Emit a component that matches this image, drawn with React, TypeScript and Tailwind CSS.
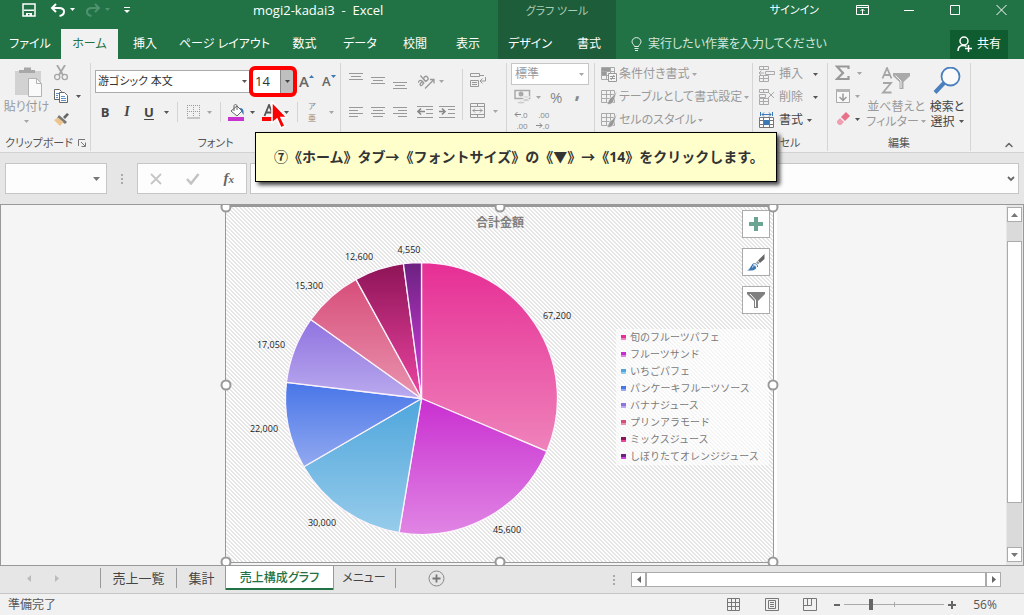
import React from 'react';
import { ChevronUp } from 'lucide-react';

const GREY = '#a6a6a6';
const DARK = '#555555';

type IconProps = { w: number; h: number; children: React.ReactNode; className?: string };

function Icon({ w, h, children, className = '' }: IconProps) {
  return (
    <svg width={w} height={h} viewBox={`0 0 ${w} ${h}`} fill="none" className={`shrink-0 ${className}`} aria-hidden="true">
      {children}
    </svg>
  );
}

function Caret({ color = DARK }: { color?: string }) {
  return (
    <Icon w={5} h={3}>
      <path d="M0 0h5L2.500 3z" fill={color} />
    </Icon>
  );
}

function CaretButton({ color = DARK, label }: { color?: string; label: string }) {
  return (
    <button aria-label={label} className="flex h-5 w-3 items-center justify-center">
      <Caret color={color} />
    </button>
  );
}

function Sep() {
  return <span className="mx-[5px] h-5 w-px bg-[#d5d5d5]" />;
}

function Group({ label, className, children, launcher }: { label: string; className: string; children: React.ReactNode; launcher?: boolean }) {
  return (
    <section className={`flex shrink-0 flex-col ${className}`}>
      <div className="flex min-h-0 flex-1 border-r border-[#d5d5d5]">
        <div className="flex min-w-0 flex-1 flex-col">
          <div className="flex-1">{children}</div>
          <div className="flex h-4 items-center justify-center text-[11px] text-[#555]">
            <span className="flex-1 text-center whitespace-nowrap">{label}</span>
            {launcher && (
              <button aria-label={`${label}の設定`} className="mr-1">
                <Icon w={8} h={8}>
                  <path d="M.5 7V.5H7M3 3l4 4M7.5 3.500V7.500H3.500" stroke="#777" />
                </Icon>
              </button>
            )}
          </div>
        </div>
      </div>
    </section>
  );
}

function Lines({ rows }: { rows: [number, number, number][] }) {
  return (
    <Icon w={16} h={16}>
      {rows.map(([y, x1, x2]) => (
        <path key={y} d={`M${x1} ${y}.5H${x2}`} stroke="#999" />
      ))}
    </Icon>
  );
}

const topTabs = [
  { t: '挿入', c: 'w-[54px]' },
  { t: 'ページ レイアウト', c: 'w-[105px]' },
  { t: '数式', c: 'w-[55px]' },
  { t: 'データ', c: 'w-[56px]' },
  { t: '校閲', c: 'w-[54px]' },
  { t: '表示', c: 'w-[52px]' },
];

function Header() {
  return (
    <header className="flex h-[59px] bg-[#217346] text-white">
      <div className="flex w-[498px] shrink-0 flex-col">
        <div className="flex h-[29px] items-center pb-[10px]">
          <div className="flex w-[253px] items-center pl-[22px]">
            <button aria-label="上書き保存">
              <Icon w={14} h={14}>
                <path d="M1 1h12v12H1z" stroke="#fff" strokeWidth="1.500" />
                <path d="M2 6.500h10v1.500H2zM4 10h6v3H7.500v-2H6v2H4z" fill="#fff" />
              </Icon>
            </button>
            <button aria-label="元に戻す" className="ml-[14px]">
              <Icon w={16} h={14}>
                <path d="M6 1 2 5l4 4M2.500 5H9c3.500 0 5 1.500 5 3.500S12.500 12.500 9.500 13" stroke="#fff" strokeWidth="2" />
              </Icon>
            </button>
            <span className="ml-1">
              <Caret color="#fff" />
            </span>
            <button aria-label="やり直し" className="ml-[10px]">
              <Icon w={16} h={14}>
                <path d="m10 1 4 4-4 4M13.500 5H7C3.500 5 2 6.500 2 8.500S3.500 12.500 6.500 13" stroke="#4f9270" strokeWidth="2" />
              </Icon>
            </button>
            <span className="ml-1">
              <Caret color="#4f9270" />
            </span>
            <button aria-label="クイック アクセス ツール バーのユーザー設定" className="ml-[14px]">
              <Icon w={6} h={6}>
                <path d="M0 .5h6" stroke="#fff" />
                <path d="M0 3h6L3 6z" fill="#fff" />
              </Icon>
            </button>
          </div>
          <h1 className="text-[13px] leading-5 whitespace-pre">mogi2-kadai3  -  Excel</h1>
        </div>
        <nav className="flex flex-1">
          <button className="mr-px w-[60px]">ファイル</button>
          <button className="w-[57px] bg-[#f1f1f1] text-[#217346]">ホーム</button>
          {topTabs.map((x) => (
            <button key={x.t} className={`whitespace-nowrap ${x.c}`}>
              {x.t}
            </button>
          ))}
        </nav>
      </div>
      <div className="flex w-[118px] shrink-0 flex-col bg-[#1e5d3a]">
        <div className="flex h-[29px] items-center justify-center pb-2 text-[11px] text-[#a9cdb8]">グラフ ツール</div>
        <nav className="flex flex-1">
          <button className="w-[64px]">デザイン</button>
          <button className="w-[54px]">書式</button>
        </nav>
      </div>
      <div className="flex min-w-0 flex-1 flex-col">
        <div className="flex h-[29px] items-center justify-end pr-[17px] pb-[10px]">
          <button className="mr-[37px] text-[11px]">サインイン</button>
          <button aria-label="リボンの表示オプション">
            <Icon w={13} h={10}>
              <path d="M.5 .5h12v9H.5zM.5 2.500h12M6.500 9V4M4.500 6l2-2 2 2" stroke="#fff" />
            </Icon>
          </button>
          <button aria-label="最小化" className="ml-[35px]">
            <Icon w={10} h={10}>
              <path d="M0 5.500h10" stroke="#fff" />
            </Icon>
          </button>
          <button aria-label="最大化" className="ml-9">
            <Icon w={10} h={10}>
              <path d="M.5 .5h9v9h-9z" stroke="#fff" />
            </Icon>
          </button>
          <button aria-label="閉じる" className="ml-9">
            <Icon w={11} h={10}>
              <path d="m.5 0 10 10M10.500 0l-10 10" stroke="#fff" />
            </Icon>
          </button>
        </div>
        <div className="flex flex-1 items-center pr-4 pl-[15px]">
          <button className="flex items-center gap-1.5 text-[#d3e6db]">
            <Icon w={11} h={14}>
              <path d="M3.500 9.500C3.500 8 1 7 1 4.800a4.500 4.200 0 0 1 9 0C10 7 7.500 8 7.500 9.500zM3.500 11.500h4M4 13.500h3" stroke="#e5f0ea" />
            </Icon>
            実行したい作業を入力してください
          </button>
          <button className="ml-auto flex h-[29px] w-[58px] items-center justify-center gap-1 bg-[#0e5c30]">
            <Icon w={16} h={16}>
              <circle cx="7" cy="5" r="4" stroke="#fff" strokeWidth="1.500" />
              <path d="M1 15c0-3.500 2-5.500 5-5.500 1.500 0 2.500.3 3.500 1M8 12.500h7M11.500 9v7" stroke="#fff" strokeWidth="1.500" />
            </Icon>
            共有
          </button>
        </div>
      </div>
    </header>
  );
}

function ClipboardGroup() {
  return (
    <Group label="クリップボード" className="w-[91px]" launcher>
      <div className="flex">
        <button className="flex w-[53px] flex-col items-center pt-1 text-[#999]">
          <Icon w={30} h={31} className="ml-1">
            <path d="M1 4h26v24H1z" fill="#d2d2d2" />
            <path d="M5 6V3h5V.5h7V3h4v3z" fill="#a8a8a8" />
            <path d="M14.500 11.500h8l5 5v13h-13z" fill="#fafafa" stroke="#b3b3b3" />
            <path d="M22.500 11.500v5h5" stroke="#b3b3b3" />
          </Icon>
          <span className="leading-[18px] whitespace-nowrap">貼り付け</span>
          <span className="mt-1">
            <Caret color={GREY} />
          </span>
        </button>
        <div className="flex flex-col gap-[7px] pt-0.5">
          <button aria-label="切り取り">
            <Icon w={16} h={16}>
              <path d="M4 0l6 10M12 0 6 10" stroke="#a6a6a6" strokeWidth="1.800" />
              <circle cx="4.200" cy="12" r="2.600" stroke="#a6a6a6" strokeWidth="1.300" />
              <circle cx="11.800" cy="12" r="2.600" stroke="#a6a6a6" strokeWidth="1.300" />
            </Icon>
          </button>
          <button aria-label="コピー" className="flex items-center gap-[7px]">
            <Icon w={16} h={16}>
              <path d="M1.500 1.500h5l2 2v8h-7z" fill="#fff" stroke="#666" />
              <path d="M6.500 4.500h5l3 3v7h-8z" fill="#fff" stroke="#666" />
              <path d="M3 5.500h3M3 7.500h2M3 9.500h2" stroke="#5c8fc4" />
              <path d="M8 8.500h4M8 10.500h5M8 12.500h5" stroke="#5c8fc4" />
            </Icon>
            <Caret />
          </button>
          <button aria-label="書式のコピー/貼り付け">
            <Icon w={16} h={16}>
              <path d="m10 6 4-4 2 1.500L12 8z" fill="#666" />
              <path d="m6 4 8 7-2 2-8-6z" fill="#777" />
              <path d="M5 6.500 1 9l6 6 3.500-4z" fill="#edc48e" />
            </Icon>
          </button>
        </div>
      </div>
    </Group>
  );
}

function FontGroup() {
  return (
    <Group label="フォント" className="w-[250px]">
      <div className="flex h-9 items-center pl-1">
        <label className="flex items-center">
          <select aria-label="フォント" className="h-[23px] w-[155px] appearance-none border border-[#ababab] bg-white pl-0.5 text-[11px] text-[#333]">
            <option>游ゴシック 本文</option>
          </select>
          <span className="-ml-2">
            <Caret />
          </span>
        </label>
        <label className="relative ml-[6px] flex h-[23px] items-center">
          <select aria-label="フォント サイズ" className="h-[23px] w-10 appearance-none bg-white pl-0.5 text-[13px] text-[#333]">
            <option>14</option>
          </select>
          <span className="-ml-[13px] flex h-[23px] w-[13px] items-center justify-center border-l border-[#8a8a8a] bg-[#bfbfbf]">
            <Caret color="#444" />
          </span>
          <span className="pointer-events-none absolute -inset-1 rounded-[6px] border-4 border-[#ff0000]" />
        </label>
        <button aria-label="フォント サイズの拡大" className="ml-[6px] flex items-start text-[15px] leading-5 font-semibold text-[#666]">
          A
          <Icon w={5} h={7}>
            <path d="M0 7h5L2.500 4z" fill="#3c78b4" />
          </Icon>
        </button>
        <button aria-label="フォント サイズの縮小" className="ml-2 flex items-start text-[13px] leading-5 font-semibold text-[#666]">
          A
          <Icon w={5} h={7}>
            <path d="M0 4h5L2.500 7z" fill="#3c78b4" />
          </Icon>
        </button>
      </div>
      <div className="flex h-[26px] items-center pl-[3px]">
        <button aria-label="太字" className="w-[22px] text-[13px] font-bold text-[#444]">B</button>
        <button aria-label="斜体" className="w-[22px] font-['Liberation_Serif',serif] text-[14px] font-bold text-[#444] italic">I</button>
        <button aria-label="下線" className="w-[22px] text-[13px] font-bold text-[#444] underline underline-offset-2">U</button>
        <CaretButton label="下線の種類" />
        <Sep />
        <button aria-label="罫線" className="flex w-5 justify-center">
          <Icon w={13} h={14}>
            <path d="M.5 0v12M6.500 0v12M12.500 0v12M0 .5h13M0 6.500h13" stroke="#999" strokeDasharray="1 1" />
            <path d="M0 13h13" stroke="#999" />
          </Icon>
        </button>
        <CaretButton label="罫線の種類" color={GREY} />
        <Sep />
        <button aria-label="塗りつぶしの色" className="flex w-5 justify-center">
          <Icon w={17} h={17}>
            <path d="m3 7 6-5 5 5-5 5z" fill="#fff" stroke="#666" />
            <path d="M6 7V2c0-2 3-2 3 0v4" stroke="#666" />
            <path d="M12 4c3 0 4 2 3.500 7L13 7z" fill="#3c78b4" />
            <path d="M0 13h16v4H0z" fill="#c832cd" />
          </Icon>
        </button>
        <CaretButton label="塗りつぶしの色の選択" />
        <button aria-label="フォントの色" className="flex w-[22px] justify-center">
          <Icon w={16} h={17}>
            <path d="M3.500 12 8 1l4.500 11M5 8.500h6" stroke="#555" strokeWidth="1.800" />
            <path d="M1 13h14v4H1z" fill="#ff0000" />
          </Icon>
        </button>
        <CaretButton label="フォントの色の選択" />
        <Sep />
        <button aria-label="ふりがなの表示" className="flex w-[18px] flex-col items-center text-[8px] leading-[12px] text-[#888]">
          <span>ア</span>
          <span>亜</span>
        </button>
        <span className="ml-1">
          <CaretButton label="ふりがなの設定" color={GREY} />
        </span>
      </div>
    </Group>
  );
}

const verticalAligns: { label: string; rows: [number, number, number][] }[] = [
  { label: '上揃え', rows: [[0, 1, 15], [3, 3, 13], [6, 1, 15]] },
  { label: '上下中央揃え', rows: [[4, 1, 15], [7, 3, 13], [10, 1, 15]] },
  { label: '下揃え', rows: [[9, 1, 15], [12, 3, 13], [15, 1, 15]] },
];

function AlignGroup() {
  return (
    <Group label="配置" className="w-[166px]">
      <div className="flex">
        <div className="my-[6px] flex w-[122px] flex-col gap-[11px] border-r border-[#d5d5d5] pl-1">
          <div className="flex h-6 items-center">
            {verticalAligns.map((a) => (
              <button key={a.label} aria-label={a.label} className="flex w-[22px] justify-center">
                <Lines rows={a.rows} />
              </button>
            ))}
            <button aria-label="方向" className="ml-1 flex w-6 items-center justify-center">
              <Icon w={18} h={16}>
                <g stroke="#999" strokeWidth="1.300" transform="rotate(-42 6 8)">
                  <path d="M.5 5.200c3-1 4 0 4 1.500V10M4.500 7.200C2 7.200.5 7.500.5 8.800S3 10.500 4.500 8.500M7 1.500V10" />
                  <circle cx="9" cy="7.500" r="2.200" />
                </g>
                <path d="m7 15.500 9-9M12 6.500h4v4" stroke="#999" strokeWidth="1.300" />
              </Icon>
            </button>
            <Caret color={GREY} />
          </div>
          <div className="flex h-4 items-center">
            <button aria-label="左揃え" className="flex w-[22px] justify-center">
              <Lines rows={[[3, 1, 15], [6, 1, 10], [9, 1, 15], [12, 1, 10]]} />
            </button>
            <button aria-label="中央揃え" className="flex w-[22px] justify-center">
              <Lines rows={[[3, 1, 15], [6, 3, 13], [9, 1, 15], [12, 3, 13]]} />
            </button>
            <button aria-label="右揃え" className="flex w-[22px] justify-center">
              <Lines rows={[[3, 1, 15], [6, 6, 15], [9, 1, 15], [12, 6, 15]]} />
            </button>
            {['インデントを減らす', 'インデントを増やす'].map((l, i) => (
              <button key={l} aria-label={l} className={i === 0 ? 'ml-[3px] flex w-[22px] justify-center' : 'flex w-[22px] justify-center'}>
                <Icon w={16} h={14}>
                  <path d="M0 1.500h16M9 4.500h7M9 8.500h7M0 12.500h16" stroke="#999" />
                  <path d={i === 0 ? 'M1 6.500h7M4 3.500l-3 3 3 3' : 'M0 6.500h6M3 3.500l3 3-3 3'} stroke="#888" strokeWidth="1.600" />
                </Icon>
              </button>
            ))}
          </div>
        </div>
        <div className="flex flex-col gap-[15px] pt-[9px] pl-[7px]">
          <button aria-label="折り返して全体を表示する">
            <Icon w={16} h={16}>
              <path d="M.5 1.500h9v3h-9zM.5 8.500h8v6h-8zM2 10.500h5M2 12.500h5M9.500 3.500H14" stroke="#999" />
              <path d="M15.500 5v4H10M12.500 6.500 10 9l2.500 2.500" stroke="#999" />
            </Icon>
          </button>
          <button aria-label="セルを結合して中央揃え" className="flex items-center gap-[7px]">
            <Icon w={16} h={16}>
              <path d="M.5 .5h14v14H.5zM.5 3.500h14M.5 11.500h14M7.500 .5v3M7.500 11.500v3M2.500 7.500h10M5 5.500l-2 2 2 2M10 5.500l2 2-2 2" stroke="#999" />
            </Icon>
            <Caret color={GREY} />
          </button>
        </div>
      </div>
    </Group>
  );
}

function NumberGroup() {
  return (
    <Group label="数値" className="w-[88px]">
      <div className="flex flex-col pl-1 text-[#999]">
        <label className="flex items-center">
          <select aria-label="表示形式" className="h-[22px] w-[78px] appearance-none border border-[#c6c6c6] bg-white pl-[3px] text-[#999]">
            <option>標準</option>
          </select>
          <span className="-ml-[10px]">
            <Caret color={GREY} />
          </span>
        </label>
        <div className="flex h-6 items-center">
          <button aria-label="通貨表示形式" className="ml-[3px] flex items-center gap-[5px]">
            <Icon w={17} h={16}>
              <path d="M1 1.500h14.500v8H1z" stroke="#aaa" strokeWidth="1.500" />
              <circle cx="7" cy="5" r="2.500" fill="#aaa" />
              <ellipse cx="12" cy="8" rx="3.500" ry="1.500" fill="#ddd" stroke="#f1f1f1" />
              <ellipse cx="12" cy="11" rx="3.500" ry="1.500" fill="#ccc" stroke="#f1f1f1" />
              <ellipse cx="7" cy="13.500" rx="3.500" ry="1.500" fill="#ccc" stroke="#f1f1f1" />
            </Icon>
            <Caret color={GREY} />
          </button>
          <button aria-label="パーセント スタイル" className="ml-[9px] text-[15px] leading-5 text-[#888]">%</button>
          <button aria-label="桁区切りスタイル" className="ml-3 pb-3 text-[20px] leading-4 font-bold text-[#888]">,</button>
        </div>
        <div className="flex h-[22px] items-center gap-2 pl-[3px] text-[8px] leading-[11px] text-[#888]">
          <button aria-label="小数点以下の表示桁数を増やす" className="flex flex-col items-end">
            <span className="flex items-center">
              <Icon w={7} h={5}>
                <path d="M7 2.500H1M3.500 0 1 2.500 3.500 5" stroke="#888" />
              </Icon>
              .0
            </span>
            <span>.00</span>
          </button>
          <button aria-label="小数点以下の表示桁数を減らす" className="flex flex-col items-end">
            <span>.00</span>
            <span className="flex items-center">
              <Icon w={7} h={5}>
                <path d="M0 2.500h6M3.500 0 6 2.500 3.500 5" stroke="#888" />
              </Icon>
              .0
            </span>
          </button>
        </div>
      </div>
    </Group>
  );
}

function StylesGroup() {
  return (
    <Group label="スタイル" className="w-[158px]">
      <div className="flex flex-col items-start gap-[3px] pt-px pl-[6px] text-[#999]">
        {['条件付き書式', 'テーブルとして書式設定', 'セルのスタイル'].map((t, i) => (
          <button key={t} className="flex h-5 items-center whitespace-nowrap">
            <Icon w={17} h={16}>
              <path d="M.5 1.500h13v12H.5zM.5 5.500h13M.5 9.500h13M5.500 1.500v12M9.500 1.500v12" stroke="#aaa" />
              {i === 0 ? (
                <>
                  <path d="M1 2h8v3H1zM1 6h4v3H1z" fill="#999" />
                  <path d="M7.500 7.500h8v8h-8z" fill="#f5f5f5" stroke="#999" />
                  <path d="M9 10.500h5M9 12.500h5M13 9l-3 5" stroke="#999" />
                </>
              ) : (
                <path d="m16 2-5 6-2 1-3 6c4 1 6-1 7-4z" fill="#999" stroke="#f1f1f1" strokeWidth=".6" />
              )}
            </Icon>
            <span className="ml-px">{t}</span>
            <span className="ml-0.5">
              <Caret color={GREY} />
            </span>
          </button>
        ))}
      </div>
    </Group>
  );
}

function CellsGroup() {
  return (
    <Group label="セル" className="w-[75px]">
      <div className="flex flex-col gap-[3px] pt-px pl-[6px]">
        {['挿入', '削除', '書式'].map((t, i) => (
          <button key={t} className={`flex h-5 items-center ${i === 2 ? 'text-[#444]' : 'text-[#999]'}`}>
            {i === 2 ? (
              <Icon w={16} h={16}>
                <path d="M1.500 0v4M13.500 0v4M3 2.500h9M5 .5l-2 2 2 2M10 .5l2 2-2 2" stroke="#3c78b4" />
                <path d="M.5 5.500h14v10H.5zM.5 8.500h14M.5 12.500h14M4.500 5.500v10M10.500 5.500v10" fill="#fff" stroke="#777" />
                <path d="M5 8h5v5H5z" fill="#3c78b4" />
              </Icon>
            ) : (
              <Icon w={16} h={16}>
                <path d="M.5 .5h9v3h-9zM4.500 .5v3M.5 9.500h9v6h-9zM.5 12.500h9M4.500 9.500v6" stroke="#aaa" />
                {i === 0 ? (
                  <path d="M6.500 5.500h9v3h-9zM5 7H0M2.500 4.500 0 7l2.500 2.500" stroke="#aaa" />
                ) : (
                  <path d="M.5 5.500h6v3h-6zM9 3l6 6M15 3 9 9" stroke="#aaa" />
                )}
              </Icon>
            )}
            <span className="ml-1 w-6">{t}</span>
            <span className={i === 2 ? 'ml-1' : 'ml-[10px]'}>
              <Caret />
            </span>
          </button>
        ))}
      </div>
    </Group>
  );
}

function EditGroup() {
  return (
    <Group label="編集" className="w-[143px]">
      <div className="flex">
        <div className="flex w-[36px] flex-col gap-[3px] pl-[7px]">
          <button aria-label="合計" className="flex h-5 items-center gap-1.5">
            <Icon w={16} h={16}>
              <path d="M13.500 4V1.500H2L8 8l-6 6h11.500V11" stroke="#999" strokeWidth="2.200" />
            </Icon>
            <Caret color={GREY} />
          </button>
          <button aria-label="フィル" className="flex h-5 items-center gap-1">
            <Icon w={16} h={16}>
              <path d="M1.500 1.500h13v13h-13z" fill="#f8f8f8" stroke="#aaa" />
              <path d="M1 1h14v3H1z" fill="#b5b5b5" />
              <path d="M8 5.500v7M4.500 9 8 12.500 11.500 9" stroke="#999" strokeWidth="1.500" />
            </Icon>
            <Caret color={GREY} />
          </button>
          <button aria-label="クリア" className="flex h-5 items-center gap-1">
            <Icon w={16} h={16}>
              <path d="m6 6 5-5 4 4-5 5z" fill="#e8718a" />
              <path d="m5 7 4 4-3 3H4l-2-2v-2z" fill="#ef9fb0" />
            </Icon>
            <Caret />
          </button>
        </div>
        <button className="ml-[5px] flex w-[54px] flex-col items-center pt-1 leading-[15px] whitespace-nowrap text-[#999]">
          <Icon w={30} h={28}>
            <path d="M1.500 11.500 6 1l4.500 10.500M3.500 8h5M2 16h8l-8 9.500h8.500" stroke="#a6a6a6" strokeWidth="1.800" />
            <path d="M12 6h17v3l-6.500 6v7h-4v-7L12 9z" fill="#aaa" />
            <path d="m14.500 8.500 5.500 5.500v7" stroke="#f1f1f1" />
          </Icon>
          <span className="mt-1">並べ替えと</span>
          <span className="flex items-center gap-0.5">
            フィルター
            <Caret color={GREY} />
          </span>
        </button>
        <button className="ml-[5px] flex w-[38px] flex-col items-center pt-1 leading-[15px] whitespace-nowrap text-[#444]">
          <Icon w={28} h={28}>
            <circle cx="17.500" cy="9.500" r="9" fill="#fafafa" stroke="#4a80bd" strokeWidth="1.800" />
            <path d="m11 16-9 9.500" stroke="#4a80bd" strokeWidth="4" />
          </Icon>
          <span className="mt-1">検索と</span>
          <span className="flex items-center gap-1">
            選択
            <Caret />
          </span>
        </button>
      </div>
    </Group>
  );
}

function FormulaBar() {
  return (
    <div className="flex h-[51px] items-center bg-[#e6e6e6] px-[5px]">
      <label className="flex w-[102px] shrink-0 items-center">
        <input aria-label="名前ボックス" className="h-[31px] w-full border border-[#c6c6c6] bg-[#fdfdfd] pr-4 pl-1" />
        <span className="-ml-[14px] w-[14px]">
          <Icon w={7} h={4}>
            <path d="M0 0h7L3.500 4z" fill="#777" />
          </Icon>
        </span>
      </label>
      <Icon w={2} h={10} className="ml-[14px]">
        <path d="M0 0h2v2H0zM0 4h2v2H0zM0 8h2v2H0z" fill="#aaa" />
      </Icon>
      <div className="ml-[14px] flex h-[31px] w-[110px] shrink-0 items-center justify-around border border-[#c6c6c6] bg-[#fdfdfd]">
        <button aria-label="キャンセル">
          <Icon w={12} h={12}>
            <path d="m1 1 10 10M11 1 1 11" stroke="#c6c6c6" strokeWidth="1.800" />
          </Icon>
        </button>
        <button aria-label="入力">
          <Icon w={14} h={12}>
            <path d="m1 6 4 4.500L12.500 1" stroke="#c3c3c3" strokeWidth="2.500" />
          </Icon>
        </button>
        <button aria-label="関数の挿入" className="font-['Liberation_Serif',serif] text-[15px] leading-5 font-bold text-[#666] italic">
          f<span className="text-[11px]">x</span>
        </button>
      </div>
      <label className="ml-[3px] flex min-w-0 flex-1 items-center">
        <input aria-label="数式バー" className="h-[31px] w-full border border-[#c6c6c6] bg-[#fdfdfd] px-2" />
        <span className="-ml-3 w-3">
          <Icon w={8} h={6}>
            <path d="m1 1 3 3 3-3" stroke="#666" strokeWidth="1.800" />
          </Icon>
        </span>
      </label>
    </div>
  );
}

const slices = [
  { name: '旬のフルーツパフェ', value: 67200, from: '#e62e95', to: '#ef83bb', lx: 332, ly: 114 },
  { name: 'フルーツサンド', value: 45600, from: '#c92fd0', to: '#e085e4', lx: 282, ly: 328 },
  { name: 'いちごパフェ', value: 30000, from: '#4fa6dc', to: '#97cceb', lx: 97, ly: 321 },
  { name: 'パンケーキフルーツソース', value: 22000, from: '#4876e8', to: '#93a9f0', lx: 39, ly: 227 },
  { name: 'バナナジュース', value: 17050, from: '#8f73e0', to: '#baaaee', lx: 46, ly: 143 },
  { name: 'プリンアラモード', value: 15300, from: '#d74e7b', to: '#e993ae', lx: 84, ly: 84 },
  { name: 'ミックスジュース', value: 12600, from: '#8e1457', to: '#ec45a1', lx: 134, ly: 55 },
  { name: 'しぼりたてオレンジジュース', value: 4550, from: '#6c2181', to: '#d63fe0', lx: 184, ly: 48 },
];

const total = slices.reduce((s, x) => s + x.value, 0);
const CX = 196.5;
const CY = 193.5;
const R = 136;

function slicePath(index: number) {
  const before = slices.slice(0, index).reduce((s, x) => s + x.value, 0);
  const a0 = (before / total) * 2 * Math.PI;
  const a1 = ((before + slices[index].value) / total) * 2 * Math.PI;
  const pt = (a: number) => `${(CX + R * Math.sin(a)).toFixed(2)} ${(CY - R * Math.cos(a)).toFixed(2)}`;
  return `M${CX} ${CY}L${pt(a0)}A${R} ${R} 0 0 1 ${pt(a1)}Z`;
}

const handles = [
  'left-0 top-0', 'left-1/2 top-0', 'left-full top-0',
  'left-0 top-1/2', 'left-full top-1/2',
  'left-0 top-full', 'left-1/2 top-full', 'left-full top-full',
];

function Chart() {
  return (
    <div className="relative h-[358px] w-[549px] shrink-0 border border-t-2 border-[#999] bg-white">
      <svg className="block" width="547" height="355" viewBox="1 2 547 355" role="img" aria-label="合計金額">
        <defs>
          <pattern id="hatch" width="4" height="4" patternUnits="userSpaceOnUse">
            <path d="M0 0h2v1H0zM1 1h2v1H1zM2 2h2v1H2zM3 3h1v1H3zM0 3h1v1H0z" fill="#e5e5e5" />
          </pattern>
          {slices.map((s, i) => (
            <linearGradient key={s.name} id={`g${i}`} x1="0" y1="0" x2="0" y2="1">
              <stop offset="0" stopColor={s.from} />
              <stop offset="1" stopColor={s.to} />
            </linearGradient>
          ))}
        </defs>
        <rect width="549" height="358" fill="url(#hatch)" />
        {slices.map((s, i) => (
          <path key={s.name} d={slicePath(i)} fill={`url(#g${i})`} stroke="#fbf3fb" strokeWidth="1.300" strokeLinejoin="round" />
        ))}
        {slices.map((s) => (
          <text key={s.name} x={s.lx} y={s.ly} textAnchor="middle" fontSize="9" fill="#222">
            {s.value.toLocaleString('en-US')}
          </text>
        ))}
        <text x="275" y="22" textAnchor="middle" fontSize="12" fontWeight="bold" fill="#808080">
          合計金額
        </text>
      </svg>
      <ul className="absolute top-[122px] right-[4px] flex w-[153px] flex-col bg-white/60 pl-[5px] text-[10px] leading-[17px] text-[#7a7a7a] [font-feature-settings:normal]">
        {slices.map((s) => (
          <li key={s.name} className="flex items-center gap-1 whitespace-nowrap">
            <svg width="5" height="5" aria-hidden="true">
              <rect width="5" height="5" fill={s.from} />
              <rect y="3" width="5" height="2" fill={s.to} />
            </svg>
            {s.name}
          </li>
        ))}
      </ul>
      <div className="absolute top-[3px] right-[3px] flex flex-col gap-[10px]">
        <button aria-label="グラフ要素" className="flex size-7 items-center justify-center border border-[#ababab] bg-white">
          <Icon w={14} h={14}>
            <path d="M5 0h4v5h5v4H9v5H5V9H0V5h5z" fill="#6aa58f" />
          </Icon>
        </button>
        <button aria-label="グラフ スタイル" className="flex size-7 items-center justify-center border border-[#ababab] bg-white">
          <Icon w={18} h={18}>
            <path d="M17.500 1v5L13 10l-2-2.500z" fill="#666" />
            <path d="m10.500 8 2 2-1.500 1.500L9 9.500z" fill="#999" />
            <path d="M0 17.500c3-1 3-3.500 5-5.500 2-1 5 1 4 3.500-1.500 2.500-6 2-9 2z" fill="#3c78b4" />
            <path d="M5.500 14.500c0-2.500 3.500-2.500 4-.5" stroke="#dbe8f5" />
            <path d="M5 12c1.500-2.500 6-1.500 5.500 2" stroke="#3c78b4" />
          </Icon>
        </button>
        <button aria-label="グラフ フィルター" className="flex size-7 items-center justify-center border border-[#ababab] bg-white">
          <Icon w={18} h={18}>
            <path d="M0 1h18v2l-7 7v7H7v-7L0 3z" fill="#808080" />
            <path d="m3 3 5.500 6v7" stroke="#fff" />
          </Icon>
        </button>
      </div>
      {handles.map((h) => (
        <span key={h} className={`absolute size-[11px] -translate-x-1/2 -translate-y-1/2 rounded-full border-2 border-[#999] bg-white ${h}`} />
      ))}
    </div>
  );
}

function Workspace() {
  return (
    <main className="flex min-h-[361px] flex-1 overflow-hidden border border-[#999] bg-[#f5f5f5]">
      <div className="flex min-w-0 flex-1 items-start overflow-hidden pl-[224px]">
        <Chart />
        <span className="h-full w-[3px] bg-white" />
      </div>
      <div className="flex w-[17px] shrink-0 flex-col items-center bg-[#e6e6e6] pt-0.5 pb-[3px]">
        <button aria-label="上へスクロール" className="flex h-[15px] w-[15px] items-center justify-center border border-[#ababab] bg-white">
          <Icon w={7} h={4}>
            <path d="M0 4h7L3.500 0z" fill="#777" />
          </Icon>
        </button>
        <div className="flex w-[15px] flex-1 flex-col bg-[#dadada] pt-[19px] pb-[44px]">
          <div className="flex-1 border border-[#ababab] bg-white" />
        </div>
        <button aria-label="下へスクロール" className="flex h-[15px] w-[15px] items-center justify-center border border-[#ababab] bg-white">
          <Icon w={7} h={4}>
            <path d="M0 0h7L3.500 4z" fill="#777" />
          </Icon>
        </button>
      </div>
    </main>
  );
}

function SheetBar() {
  return (
    <div className="flex h-[27px] items-start bg-[#e6e6e6] text-[13px] text-[#444]">
      <div className="flex h-[25px] w-[100px] items-center gap-6 pl-[27px]">
        <button aria-label="前のシート">
          <Icon w={4} h={7}>
            <path d="M4 0v7L0 3.500z" fill="#bbb" />
          </Icon>
        </button>
        <button aria-label="次のシート">
          <Icon w={4} h={7}>
            <path d="M0 0v7l4-3.500z" fill="#bbb" />
          </Icon>
        </button>
      </div>
      <nav className="flex h-6 items-stretch">
        <button className="my-0.5 w-[77px] border-x border-[#999] leading-5 whitespace-nowrap">売上一覧</button>
        <button className="w-[49px] leading-6">集計</button>
        <button className="w-[107px] border-b-2 border-[#217346] bg-white pt-0.5 text-[12px] leading-5 font-medium whitespace-nowrap text-[#217346] shadow-[1px_0_0_#999,-1px_0_0_#999]">売上構成グラフ</button>
        <button className="my-0.5 w-[63px] border-r border-[#999] text-[12px] leading-5 whitespace-nowrap">メニュー</button>
      </nav>
      <button aria-label="新しいシート" className="mt-1 ml-8">
        <Icon w={17} h={17}>
          <circle cx="8.500" cy="8.500" r="7.500" stroke="#8a8a8a" />
          <path d="M8.500 4.500v8M4.500 8.500h8" stroke="#777" strokeWidth="1.800" />
        </Icon>
      </button>
      <div className="mt-[6px] mr-[23px] ml-auto flex items-center">
        <Icon w={2} h={10} className="mr-4">
          <path d="M0 0h2v2H0zM0 4h2v2H0zM0 8h2v2H0z" fill="#aaa" />
        </Icon>
        <button aria-label="左へスクロール" className="flex h-[15px] w-[15px] items-center justify-center border border-[#ababab] bg-white">
          <Icon w={4} h={7}>
            <path d="M4 0v7L0 3.500z" fill="#666" />
          </Icon>
        </button>
        <div className="h-[15px] w-[340px] border border-[#ababab] bg-white" />
        <button aria-label="右へスクロール" className="flex h-[15px] w-[15px] items-center justify-center border border-[#ababab] bg-white">
          <Icon w={4} h={7}>
            <path d="M0 0v7l4-3.500z" fill="#666" />
          </Icon>
        </button>
      </div>
    </div>
  );
}

function StatusBar() {
  return (
    <footer className="flex h-[22px] items-center border-t border-[#c6c6c6] bg-[#f1f1f1] pr-[26px] pl-2 text-[#555]">
      <span className="flex-1">準備完了</span>
      <button aria-label="標準">
        <Icon w={13} h={13}>
          <path d="M.5 .5h12v12H.5zM.5 4.500h12M.5 8.500h12M4.500 .5v12M8.500 .5v12" stroke="#777" />
        </Icon>
      </button>
      <button aria-label="ページ レイアウト" className="ml-[25px]">
        <Icon w={14} h={13}>
          <path d="M.5 .5h13v12H.5zM3.500 2.500h7v8h-7zM5 4.500h4M5 6.500h4M5 8.500h4" stroke="#777" />
        </Icon>
      </button>
      <button aria-label="改ページ プレビュー" className="ml-6">
        <Icon w={14} h={13}>
          <path d="M.5 .5h13v12H.5zM.5 7.500h8v-7M4.500 .5v7" stroke="#777" />
        </Icon>
      </button>
      <button aria-label="縮小" className="ml-[17px]">
        <Icon w={6} h={8}>
          <path d="M0 4h6" stroke="#666" strokeWidth="2" />
        </Icon>
      </button>
      <div className="relative ml-1 flex items-center">
        <input
          type="range"
          aria-label="ズーム"
          min={0}
          max={100}
          defaultValue={26}
          className="h-[11px] w-[100px] appearance-none bg-transparent [&::-webkit-slider-runnable-track]:h-px [&::-webkit-slider-runnable-track]:bg-[#aaa] [&::-webkit-slider-thumb]:-mt-[5px] [&::-webkit-slider-thumb]:h-[11px] [&::-webkit-slider-thumb]:w-1 [&::-webkit-slider-thumb]:appearance-none [&::-webkit-slider-thumb]:bg-[#666]"
        />
        <span className="pointer-events-none absolute left-1/2 h-[5px] w-px bg-[#aaa]" />
      </div>
      <button aria-label="拡大" className="ml-1">
        <Icon w={8} h={8}>
          <path d="M0 4h8M4 0v8" stroke="#666" strokeWidth="2" />
        </Icon>
      </button>
      <button className="ml-4 w-[26px] text-[12px]">56%</button>
    </footer>
  );
}

export default function App() {
  return (
    <div className="relative flex min-h-screen flex-col overflow-hidden bg-[#e6e6e6] font-['Open_Sans','Noto_Sans_CJK_JP',sans-serif] text-[12px] leading-4 [font-feature-settings:'palt']">
      <Header />
      <div className="flex h-[94px] border-b border-[#d2d2d2] bg-[#f1f1f1] pt-1 pb-px">
        <ClipboardGroup />
        <FontGroup />
        <AlignGroup />
        <NumberGroup />
        <StylesGroup />
        <CellsGroup />
        <EditGroup />
        <div className="flex flex-1 items-end justify-end pr-[9px]">
          <button aria-label="リボンを折りたたむ">
            <ChevronUp size={12} color="#666" strokeWidth={3} />
          </button>
        </div>
      </div>
      <FormulaBar />
      <Workspace />
      <SheetBar />
      <StatusBar />
      <div role="note" className="absolute top-[132px] left-[255px] flex h-[50px] w-[522px] items-center border border-black bg-[#ffffcc] pl-[18px] text-[14px] font-bold whitespace-nowrap text-[#333] shadow-[3px_3px_4px_#444] [font-feature-settings:normal]">
        ⑦《ホーム》タブ→《フォントサイズ》の《▼》→《14》をクリックします。
      </div>
      <svg className="pointer-events-none absolute top-[100px] left-[270px]" width="18" height="30" aria-hidden="true">
        <path d="M2 2v21l5-4 4 9 4-2-4-8.500h6z" fill="#ff0000" stroke="#fff" strokeWidth="1.500" />
      </svg>
    </div>
  );
}
